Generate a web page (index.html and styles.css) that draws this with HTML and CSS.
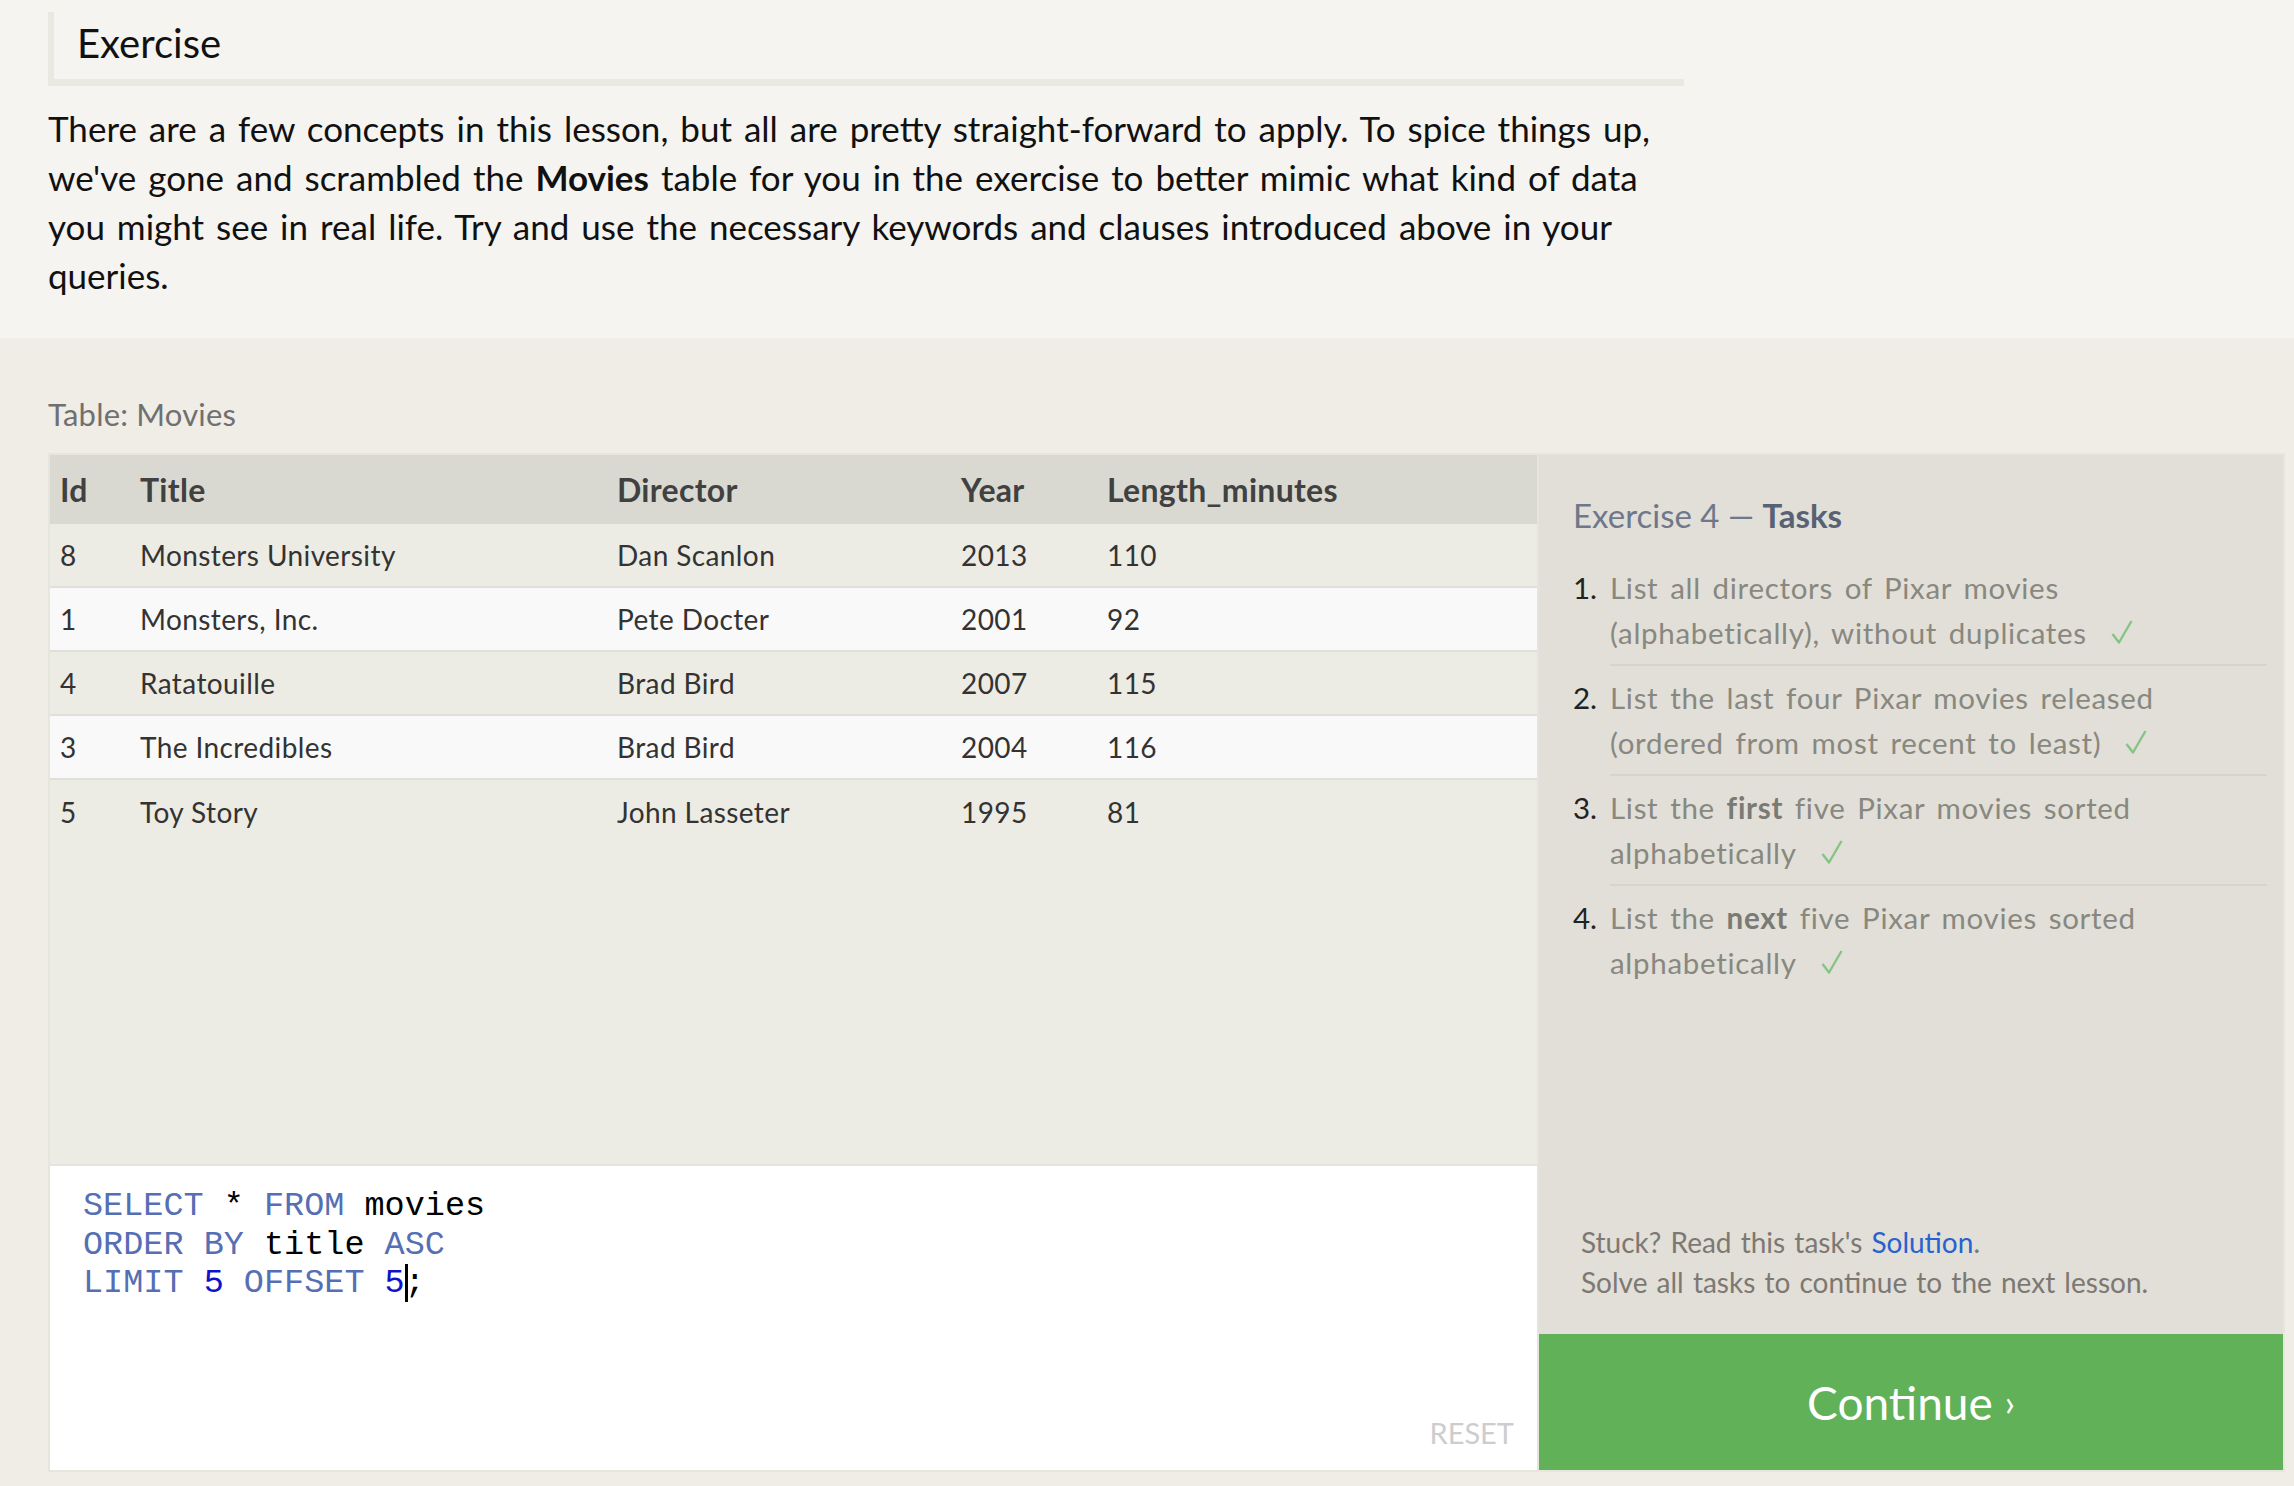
FILE: index.html
```html
<!DOCTYPE html>
<html lang="en">
<head>
<meta charset="utf-8">
<title>SQL Lesson - Exercise</title>
<link rel="stylesheet" href="styles.css">
</head>
<body>
<div class="page">
  <section class="intro">
    <h2 class="intro-title">Exercise</h2>
    <p class="intro-text">There are a few concepts in this lesson, but all are pretty straight-forward to apply. To spice things up, we've gone and scrambled the <strong>Movies</strong> table for you in the exercise to better mimic what kind of data you might see in real life. Try and use the necessary keywords and clauses introduced above in your queries.</p>
  </section>

  <section class="workspace">
    <div class="table-label">Table: Movies</div>
    <div class="exercise">
      <div class="left-pane">
        <div class="table-area">
          <table class="movies">
            <colgroup>
              <col class="c-id"><col class="c-title"><col class="c-director"><col class="c-year"><col class="c-length">
            </colgroup>
            <thead>
              <tr><th>Id</th><th>Title</th><th>Director</th><th>Year</th><th>Length_minutes</th></tr>
            </thead>
            <tbody>
              <tr><td>8</td><td>Monsters University</td><td>Dan Scanlon</td><td>2013</td><td>110</td></tr>
              <tr><td>1</td><td>Monsters, Inc.</td><td>Pete Docter</td><td>2001</td><td>92</td></tr>
              <tr><td>4</td><td>Ratatouille</td><td>Brad Bird</td><td>2007</td><td>115</td></tr>
              <tr><td>3</td><td>The Incredibles</td><td>Brad Bird</td><td>2004</td><td>116</td></tr>
              <tr><td>5</td><td>Toy Story</td><td>John Lasseter</td><td>1995</td><td>81</td></tr>
            </tbody>
          </table>
        </div>
        <div class="editor">
<pre class="code"><span class="kw">SELECT</span> * <span class="kw">FROM</span> movies
<span class="kw">ORDER</span> <span class="kw">BY</span> title <span class="kw">ASC</span>
<span class="kw">LIMIT</span> <span class="cm-num">5</span> <span class="kw">OFFSET</span> <span class="cm-num">5</span><span class="cursor"></span>;</pre>
          <div class="reset">RESET</div>
        </div>
      </div>

      <aside class="tasks">
        <h3 class="tasks-title">Exercise 4 — <strong>Tasks</strong></h3>
        <ol class="task-list">
          <li><span class="task-num">1.</span><div class="task-text"><div class="task-body">List all directors of Pixar movies (alphabetically), without <span class="last">duplicates<svg class="check" viewBox="0 0 22 24" width="22" height="24"><path d="M1.5 14 L8 22.5 L20.5 1" fill="none" stroke="#86c486" stroke-width="2.4" stroke-linejoin="round"/></svg></span></div></div></li>
          <li><span class="task-num">2.</span><div class="task-text"><div class="task-body">List the last four Pixar movies released (ordered from most recent to <span class="last">least)<svg class="check" viewBox="0 0 22 24" width="22" height="24"><path d="M1.5 14 L8 22.5 L20.5 1" fill="none" stroke="#86c486" stroke-width="2.4" stroke-linejoin="round"/></svg></span></div></div></li>
          <li><span class="task-num">3.</span><div class="task-text"><div class="task-body">List the <strong>first</strong> five Pixar movies sorted <span class="last">alphabetically<svg class="check" viewBox="0 0 22 24" width="22" height="24"><path d="M1.5 14 L8 22.5 L20.5 1" fill="none" stroke="#86c486" stroke-width="2.4" stroke-linejoin="round"/></svg></span></div></div></li>
          <li><span class="task-num">4.</span><div class="task-text"><div class="task-body">List the <strong>next</strong> five Pixar movies sorted <span class="last">alphabetically<svg class="check" viewBox="0 0 22 24" width="22" height="24"><path d="M1.5 14 L8 22.5 L20.5 1" fill="none" stroke="#86c486" stroke-width="2.4" stroke-linejoin="round"/></svg></span></div></div></li>
        </ol>
        <div class="help">
          <div>Stuck? Read this task's <a class="solution" href="#">Solution</a>.</div>
          <div>Solve all tasks to continue to the next lesson.</div>
        </div>
        <div class="continue">Continue<span class="chev">›</span></div>
      </aside>
    </div>
  </section>
</div>
</body>
</html>
```

FILE: styles.css
```css
* {
  box-sizing: border-box;
}

html, body {
  margin: 0;
  padding: 0;
}

body {
  width: 2294px;
  height: 1486px;
  overflow: hidden;
  background: #efede6;
  font-family: Lato, "Open Sans", sans-serif;
  color: #111;
}

/* ---------- intro ---------- */
.intro {
  background: #f5f4f0;
  padding: 12px 0 38px 48px;
}

.intro-title {
  width: 1636px;
  margin: 0;
  padding: 7px 0 12px 23px;
  font-size: 40px;
  font-weight: 400;
  line-height: 48px;
  color: #111;
  border-left: 6px solid #e9e8e1;
  border-bottom: 7px solid #e9e8e1;
}

.intro-text {
  width: 1636px;
  margin: 18px 0 0;
  font-size: 35px;
  line-height: 49px;
  word-spacing: 3px;
  color: #111;
}

.intro-text strong {
  font-weight: 700;
}

/* ---------- workspace ---------- */
.workspace {
  padding: 0 9px 14px 48px;
}

.table-label {
  padding-top: 58px;
  margin-bottom: 20px;
  font-size: 31px;
  line-height: 37px;
  letter-spacing: 0.2px;
  color: #707070;
}

.exercise {
  display: flex;
  height: 1019px;
  border: 2px solid #e6e5de;
}

.left-pane {
  flex: 1;
  min-width: 0;
  display: flex;
  flex-direction: column;
}

.table-area {
  flex: 1;
  background: #ecebe4;
}

/* ---------- table ---------- */
.movies {
  width: 100%;
  border-collapse: separate;
  border-spacing: 0;
  table-layout: fixed;
}

.c-id { width: 80px; }
.c-title { width: 477px; }
.c-director { width: 344px; }
.c-year { width: 146px; }

.movies th {
  height: 69px;
  padding: 0 10px;
  background: #d9d9d1;
  font-size: 32px;
  font-weight: 700;
  letter-spacing: 0.3px;
  color: #414141;
  text-align: left;
  white-space: nowrap;
}

.movies td {
  height: 64px;
  padding: 0 10px;
  font-size: 28px;
  letter-spacing: 0.4px;
  color: #333;
  white-space: nowrap;
  border-bottom: 2px solid #e0dfd9;
}

.movies tbody tr:nth-child(odd) td {
  background: #ecebe4;
}

.movies tbody tr:nth-child(even) td {
  background: #f9f9f9;
}

.movies tbody tr:last-child td {
  border-bottom: none;
}

/* ---------- editor ---------- */
.editor {
  height: 306px;
  background: #fff;
  border-top: 2px solid #e4e3dc;
  display: flex;
  flex-direction: column;
  padding: 21px 23px 20px 33px;
}

.code {
  margin: 0;
  font-family: "Liberation Mono", "DejaVu Sans Mono", monospace;
  font-size: 33.5px;
  line-height: 38.6px;
  color: #000;
}

.kw {
  color: #566fb4;
}

.cm-num {
  color: #1111cc;
}

.cursor {
  display: inline-block;
  width: 3px;
  height: 38px;
  margin-right: -3px;
  background: #000;
  vertical-align: top;
}

.reset {
  margin-top: auto;
  align-self: flex-end;
  font-size: 29px;
  line-height: 35px;
  color: #cdcdcd;
}

/* ---------- tasks ---------- */
.tasks {
  width: 746px;
  flex: none;
  display: flex;
  flex-direction: column;
  background: #e1dfd7;
  border-left: 2px solid #e4e3dc;
}

.tasks-title {
  margin: 0;
  padding: 40px 0 0 34px;
  font-size: 33px;
  font-weight: 400;
  line-height: 40px;
  color: #6f788a;
}

.tasks-title strong {
  font-weight: 700;
  color: #586275;
}

.task-list {
  list-style: none;
  margin: 21px 16px 0 34px;
  padding: 0;
}

.task-list li {
  display: flex;
  font-size: 29.5px;
  line-height: 45px;
  color: #888880;
}

.task-num {
  width: 37px;
  flex: none;
  padding-top: 9px;
  color: #222;
}

.task-text {
  flex: 1;
  padding: 9px 0;
  border-bottom: 2px solid #d6d5cd;
}

.task-body {
  max-width: 590px;
  word-spacing: 3.5px;
  letter-spacing: 0.7px;
}

.task-body strong {
  font-weight: 700;
  color: #7a7a74;
}

.last {
  white-space: nowrap;
}

.task-list li:last-child .task-text {
  border-bottom: none;
}

.check {
  margin-left: 24px;
  vertical-align: baseline;
}

.help {
  margin-top: auto;
  padding: 0 20px 32px 42px;
  font-size: 28px;
  line-height: 40px;
  color: #7d7873;
  word-spacing: 2px;
}

.solution {
  color: #2862d0;
  text-decoration: none;
}

.continue {
  height: 136px;
  flex: none;
  display: flex;
  align-items: center;
  justify-content: center;
  background: #60b158;
  color: #fff;
  font-size: 46px;
  line-height: 55px;
}

.chev {
  margin-left: 12px;
  font-size: 36px;
}
```
